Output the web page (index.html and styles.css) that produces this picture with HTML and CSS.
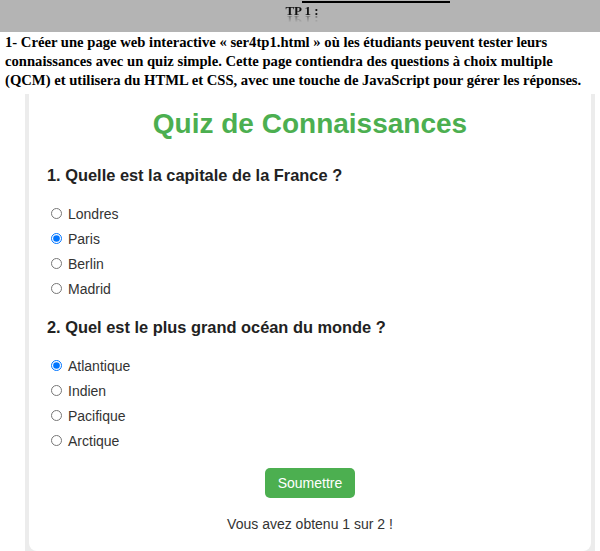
FILE: index.html
```html
<!DOCTYPE html>
<html lang="fr">
<head>
<meta charset="utf-8">
<title>TP 1</title>
<link rel="stylesheet" href="styles.css">
</head>
<body>
<div class="bar">
  <div class="rule"></div>
  <div class="tp">TP 1 :</div>
</div>
<p class="intro">1- Créer une page web interactive « ser4tp1.html » où les étudiants peuvent tester leurs connaissances avec un quiz simple. Cette page contiendra des questions à choix multiple (QCM) et utilisera du HTML et CSS, avec une touche de JavaScript pour gérer les réponses.</p>
<div class="frame">
  <div class="card">
    <h1 class="title">Quiz de Connaissances</h1>
    <div class="question">
      <h2 class="qtitle">1. Quelle est la capitale de la France ?</h2>
      <label class="opt"><input type="radio" name="q1"> Londres</label>
      <label class="opt"><input type="radio" name="q1" checked> Paris</label>
      <label class="opt"><input type="radio" name="q1"> Berlin</label>
      <label class="opt"><input type="radio" name="q1"> Madrid</label>
    </div>
    <div class="question">
      <h2 class="qtitle">2. Quel est le plus grand océan du monde ?</h2>
      <label class="opt"><input type="radio" name="q2" checked> Atlantique</label>
      <label class="opt"><input type="radio" name="q2"> Indien</label>
      <label class="opt"><input type="radio" name="q2"> Pacifique</label>
      <label class="opt"><input type="radio" name="q2"> Arctique</label>
    </div>
    <div class="actions"><button class="submit" type="button">Soumettre</button></div>
    <p class="result">Vous avez obtenu 1 sur 2 !</p>
  </div>
</div>
</body>
</html>
```
FILE: styles.css
```css
html, body { margin: 0; padding: 0; background: #fff; }
body { width: 600px; height: 551px; overflow: hidden; }

.bar {
  background: #b4b4b4;
  height: 32px;
  padding-top: 1px;
  box-sizing: border-box;
}
.rule {
  margin-left: 302px;
  width: 148px;
  height: 2px;
  background: #000;
}
.tp {
  font-family: "Liberation Serif", serif;
  font-weight: bold;
  font-size: 13px;
  line-height: 13px;
  text-align: center;
  padding-top: 1px;
  padding-left: 4px;
  color: #111;
  -webkit-box-reflect: below -3px linear-gradient(transparent 40%, rgba(0,0,0,0.5));
}

.intro {
  margin: 1px 0 0 5px;
  width: 592px;
  font-family: "Liberation Serif", serif;
  font-weight: bold;
  font-size: 14.65px;
  line-height: 19px;
  color: #000;
}

.frame {
  margin: 4px 0 0 25px;
  width: 570px;
  height: 460px;
  background: #ececec;
  padding: 0 4px 3px 4px;
  box-sizing: border-box;
}
.card {
  background: #fff;
  height: 100%;
  border-radius: 0 0 8px 8px;
  padding: 14px 18px 0 18px;
  box-sizing: border-box;
  font-family: "Liberation Sans", Arial, sans-serif;
  color: #333;
}
.title {
  margin: 0 0 25px 0;
  text-align: center;
  color: #4caf50;
  font-size: 28px;
  line-height: 32px;
}
.question { margin-top: 16px; }
.qtitle {
  margin: 0 0 16px 0;
  font-size: 16.4px;
  line-height: 20px;
  color: #222;
}
.opt {
  display: flex;
  align-items: center;
  height: 25px;
  font-size: 14px;
  color: #333;
}
.opt input {
  width: 11px;
  height: 11px;
  margin: 0 6px 0 4px;
}
.actions { text-align: center; margin-top: 15px; }
.submit {
  background: #4caf50;
  color: #fff;
  border: none;
  border-radius: 5px;
  width: 90px;
  height: 30px;
  font-family: "Liberation Sans", Arial, sans-serif;
  font-size: 14px;
}
.result {
  text-align: center;
  margin: 18px 0 0 0;
  font-size: 14px;
}
```
